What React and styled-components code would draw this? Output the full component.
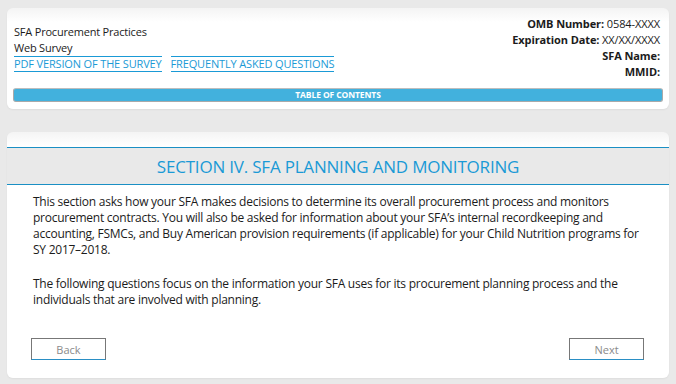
import styled, { createGlobalStyle } from "styled-components";

const GlobalStyle = createGlobalStyle`
  html, body {
    margin: 0;
    padding: 0;
    background: #e9e9e9;
    font-family: "Open Sans", "Noto Sans", "Liberation Sans", sans-serif;
    color: #1b1b1b;
  }
`;

const Page = styled.div`
  padding: 8px 7px;
  display: flex;
  flex-direction: column;
  gap: 23px;
`;

const Card = styled.div`
  background: linear-gradient(to bottom, #f4f4f4 0px, #ffffff 14px);
  border-radius: 6px;
  box-shadow: 0 1px 2px rgba(0, 0, 0, 0.05);
`;

const HeaderCard = styled(Card)`
  padding: 8px 8px 7px 7px;
`;

const HeaderRow = styled.div`
  display: flex;
  justify-content: space-between;
  align-items: center;
`;

const Brand = styled.div`
  display: flex;
  flex-direction: column;
  font-size: 11px;
  letter-spacing: -0.2px;
  line-height: 16px;
`;

const LinkRow = styled.div`
  display: flex;
  gap: 9px;
`;

const TopLink = styled.a`
  color: #1a9ad6;
  text-decoration: none;
  border-top: 1px solid #1a9ad6;
  border-bottom: 1px solid #1a9ad6;
  line-height: 14px;
  font-size: 11px;
  letter-spacing: -0.15px;
`;

const Meta = styled.div`
  text-align: right;
  font-size: 11px;
  letter-spacing: -0.1px;
  line-height: 16px;
  padding-right: 1px;

  b {
    font-weight: 700;
  }
`;

const TocBar = styled.button`
  display: block;
  width: calc(100% + 3px);
  margin: 8px 0 0 -1px;
  height: 14px;
  padding: 0;
  border: 1px solid #a9a9a9;
  border-top-color: #bdbdbd;
  border-radius: 3px;
  background: #42b1dd;
  color: #fff;
  font-family: inherit;
  font-weight: 700;
  font-size: 8.5px;
  letter-spacing: -0.1px;
  line-height: 12px;
  text-align: center;
`;

const SectionCard = styled(Card)`
  padding: 15px 0 18px;
`;

const TitleBand = styled.div`
  background: #e9e9e9;
  border-top: 1px solid #1a8fc4;
  border-bottom: 1px solid #1a8fc4;
  height: 36px;
  display: flex;
  align-items: center;
  justify-content: center;
`;

const Title = styled.h2`
  margin: 0;
  color: #1a9ad6;
  font-size: 17px;
  font-weight: 400;
  letter-spacing: -0.2px;
`;

const Body = styled.div`
  padding: 9px 26px 0 26px;
  font-size: 12px;
  letter-spacing: -0.25px;
  line-height: 16px;

  p {
    margin: 0 0 18px;
  }
`;

const Nav = styled.div`
  display: flex;
  justify-content: space-between;
  padding: 12px 25px 0 24px;
`;

const NavButton = styled.button`
  width: 75px;
  height: 22px;
  background: #fff;
  border: 1px solid #777;
  border-bottom-color: #2a8fc5;
  color: #8a8a8a;
  font-family: inherit;
  font-size: 11px;
  padding: 0;
`;

export default function App() {
  return (
    <>
      <GlobalStyle />
      <Page>
        <HeaderCard>
          <HeaderRow>
            <Brand>
              <span>SFA Procurement Practices</span>
              <span>Web Survey</span>
              <LinkRow>
                <TopLink href="#">PDF VERSION OF THE SURVEY</TopLink>
                <TopLink href="#">FREQUENTLY ASKED QUESTIONS</TopLink>
              </LinkRow>
            </Brand>
            <Meta>
              <div>
                <b>OMB Number:</b> 0584-XXXX
              </div>
              <div>
                <b>Expiration Date:</b> XX/XX/XXXX
              </div>
              <div>
                <b>SFA Name:</b>
              </div>
              <div>
                <b>MMID:</b>
              </div>
            </Meta>
          </HeaderRow>
          <TocBar>TABLE OF CONTENTS</TocBar>
        </HeaderCard>

        <SectionCard>
          <TitleBand>
            <Title>SECTION IV. SFA PLANNING AND MONITORING</Title>
          </TitleBand>
          <Body>
            <p>
              This section asks how your SFA makes decisions to determine its
              overall procurement process and monitors procurement contracts.
              You will also be asked for information about your SFA’s internal
              recordkeeping and accounting, FSMCs, and Buy American provision
              requirements (if applicable) for your Child Nutrition programs
              for SY 2017–2018.
            </p>
            <p>
              The following questions focus on the information your SFA uses
              for its procurement planning process and the individuals that are
              involved with planning.
            </p>
          </Body>
          <Nav>
            <NavButton>Back</NavButton>
            <NavButton>Next</NavButton>
          </Nav>
        </SectionCard>
      </Page>
    </>
  );
}
